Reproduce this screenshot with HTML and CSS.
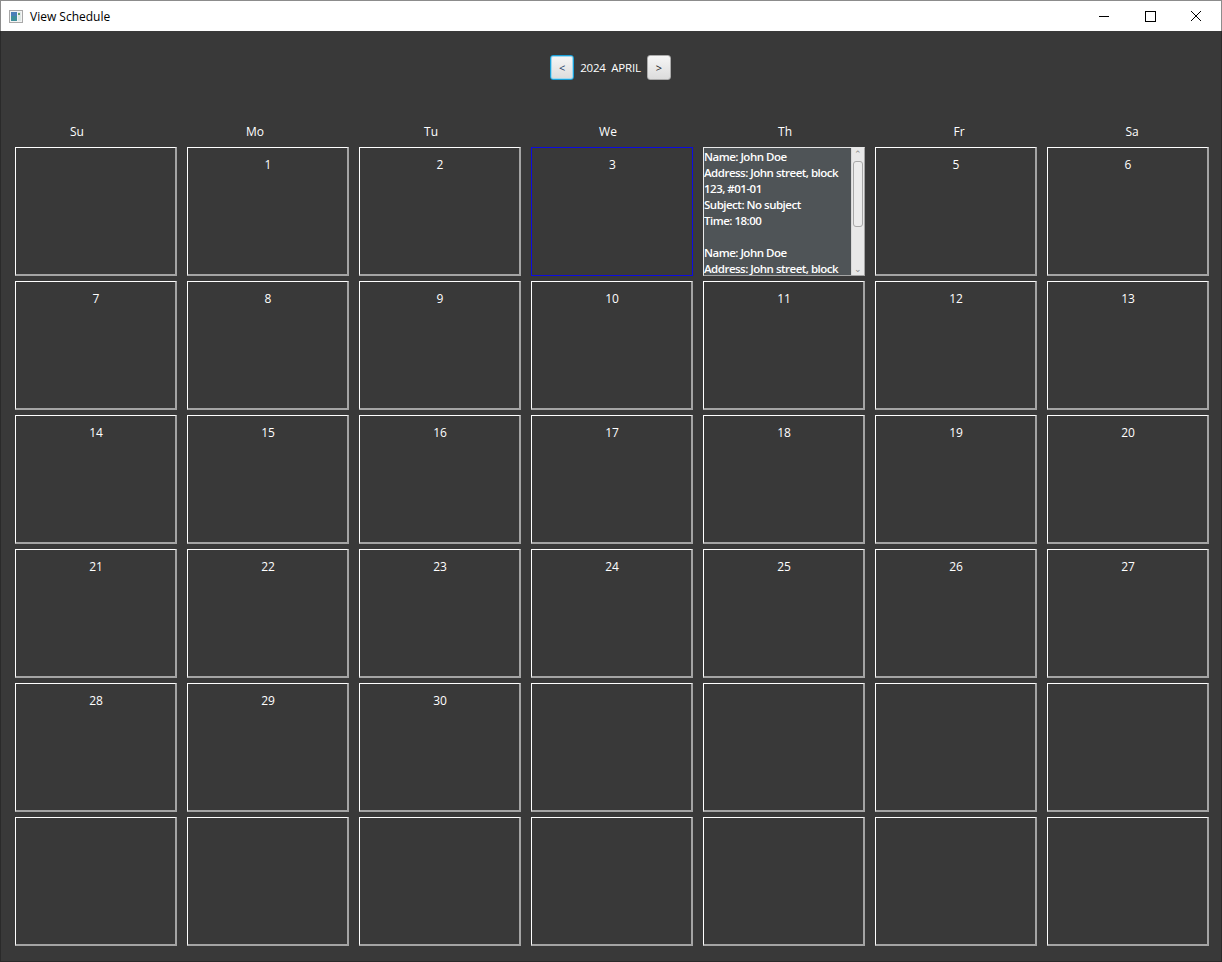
FILE: index.html
```html
<!DOCTYPE html>
<html lang="en">
<head>
  <meta charset="UTF-8" />
  <title>View Schedule</title>
  <link rel="stylesheet" href="styles.css">
</head>
<body>
  <div class="titlebar">
    <div class="title">
      <svg class="app-icon" width="14" height="13" viewBox="0 0 14 13">
        <rect x="0.5" y="0.5" width="13" height="12" fill="#f4f4f4" stroke="#a8a8a8"/>
        <rect x="2" y="2" width="6" height="9" fill="#3f8f9a"/>
        <rect x="2" y="2" width="6" height="4" fill="#4b7fb8"/>
        <rect x="9" y="2" width="3" height="9" fill="#dfe8e6"/>
        <rect x="9" y="3" width="2" height="2" fill="#6aa36a"/>
      </svg>
      <span>View Schedule</span>
    </div>
    <div class="win-controls">
      <svg width="46" height="30" viewBox="0 0 46 30"><line x1="18" y1="15.5" x2="28" y2="15.5" stroke="#000" stroke-width="1"/></svg>
      <svg width="46" height="30" viewBox="0 0 46 30"><rect x="18.5" y="10.5" width="10" height="10" fill="none" stroke="#000" stroke-width="1"/></svg>
      <svg width="46" height="30" viewBox="0 0 46 30"><path d="M18 10 L28 20 M28 10 L18 20" stroke="#000" stroke-width="1"/></svg>
    </div>
  </div>

  <div class="window">
    <div class="month-nav">
      <button class="nav-btn focused">&lt;</button>
      <span class="month-label">2024&nbsp; APRIL</span>
      <button class="nav-btn">&gt;</button>
    </div>

    <div class="weekdays">
      <div>Su</div><div>Mo</div><div>Tu</div><div>We</div><div>Th</div><div>Fr</div><div>Sa</div>
    </div>

    <div class="calendar">
      <div class="day"></div>
      <div class="day">1</div>
      <div class="day">2</div>
      <div class="day today">3</div>
      <div class="day has-events">
        <div class="events">
          Name: John Doe<br>
          Address: John street, block<br>
          123, #01-01<br>
          Subject: No subject<br>
          Time: 18:00<br>
          <br>
          Name: John Doe<br>
          Address: John street, block
        </div>
        <div class="scrollbar">
          <div class="arrow">&#8963;</div>
          <div class="track"><div class="thumb"></div></div>
          <div class="arrow">&#8964;</div>
        </div>
      </div>
      <div class="day">5</div>
      <div class="day">6</div>

      <div class="day">7</div>
      <div class="day">8</div>
      <div class="day">9</div>
      <div class="day">10</div>
      <div class="day">11</div>
      <div class="day">12</div>
      <div class="day">13</div>

      <div class="day">14</div>
      <div class="day">15</div>
      <div class="day">16</div>
      <div class="day">17</div>
      <div class="day">18</div>
      <div class="day">19</div>
      <div class="day">20</div>

      <div class="day">21</div>
      <div class="day">22</div>
      <div class="day">23</div>
      <div class="day">24</div>
      <div class="day">25</div>
      <div class="day">26</div>
      <div class="day">27</div>

      <div class="day">28</div>
      <div class="day">29</div>
      <div class="day">30</div>
      <div class="day"></div>
      <div class="day"></div>
      <div class="day"></div>
      <div class="day"></div>

      <div class="day"></div>
      <div class="day"></div>
      <div class="day"></div>
      <div class="day"></div>
      <div class="day"></div>
      <div class="day"></div>
      <div class="day"></div>
    </div>
  </div>
</body>
</html>
```

FILE: styles.css
```css
* {
  margin: 0;
  padding: 0;
  box-sizing: border-box;
  font-family: 'Segoe UI', 'Open Sans', sans-serif;
}

html, body {
  width: 1222px;
  height: 962px;
  overflow: hidden;
  background: #fff;
}

.titlebar {
  height: 31px;
  display: flex;
  justify-content: space-between;
  align-items: center;
  background: #fff;
  border: 1px solid #8c8c8c;
  border-bottom: none;
}

.title {
  display: flex;
  align-items: center;
  padding-left: 8px;
  font-size: 12px;
  color: #000;
}

.app-icon {
  margin-right: 7px;
}

.win-controls {
  display: flex;
  height: 30px;
  margin-right: 2px;
}

.window {
  height: 931px;
  background: #393939;
  border: 1px solid #2a2a2a;
  border-top: none;
  overflow: hidden;
}

.month-nav {
  display: flex;
  justify-content: center;
  align-items: center;
  gap: 6px;
  padding-top: 24px;
  padding-right: 1px;
}

.nav-btn {
  width: 24px;
  height: 25px;
  border: 1px solid #ababab;
  border-radius: 3px;
  background: linear-gradient(#f6f6f6, #dcdcdc);
  color: #222;
  font-size: 11px;
}

.nav-btn.focused {
  border: 1px solid #1aa0d8;
  box-shadow: inset 0 0 0 1px #9fd8ef;
  color: #1b3c66;
}

.month-label {
  color: #fff;
  font-size: 11.5px;
  letter-spacing: -0.2px;
}

.weekdays {
  display: grid;
  grid-template-columns: 152px 204px 148px 206px 148px 200px 146px;
  margin-top: 44px;
  color: #fff;
  font-size: 12px;
  line-height: 16px;
  text-align: center;
}

.calendar {
  display: grid;
  grid-template-columns: repeat(7, 162px);
  grid-auto-rows: 129px;
  column-gap: 10px;
  row-gap: 5px;
  margin-top: 7px;
  margin-left: 14px;
}

.day {
  border: 1px solid;
  border-color: #ffffff #a4a4a4 #a4a4a4 #ffffff;
  border-right-width: 2px;
  border-bottom-width: 2px;
  color: #fff;
  font-size: 12px;
  line-height: 16px;
  text-align: center;
  padding-top: 9px;
  padding-left: 1px;
}

.day.today {
  border-width: 1px;
  border-color: #0c0ce0;
}

.day.has-events {
  display: flex;
  padding: 0;
  text-align: left;
  background: #4f5457;
  border-color: #e8e8e8 #a4a4a4 #a4a4a4 #e8e8e8;
  border-width: 1px;
  overflow: hidden;
}

.events {
  flex: 1;
  padding-top: 1px;
  font-size: 11.5px;
  font-weight: 600;
  letter-spacing: -0.5px;
  line-height: 16px;
  white-space: nowrap;
  overflow: hidden;
}

.scrollbar {
  width: 13px;
  display: flex;
  flex-direction: column;
  background: #e8e8e8;
  border-left: 1px solid #d8d8d8;
}

.arrow {
  height: 12px;
  color: #8a8a8a;
  font-size: 9px;
  line-height: 12px;
  text-align: center;
}

.track {
  flex: 1;
  padding: 1px;
}

.thumb {
  height: 66px;
  border: 1px solid #a8a8a8;
  border-radius: 3px;
  background: #ececec;
}
```
